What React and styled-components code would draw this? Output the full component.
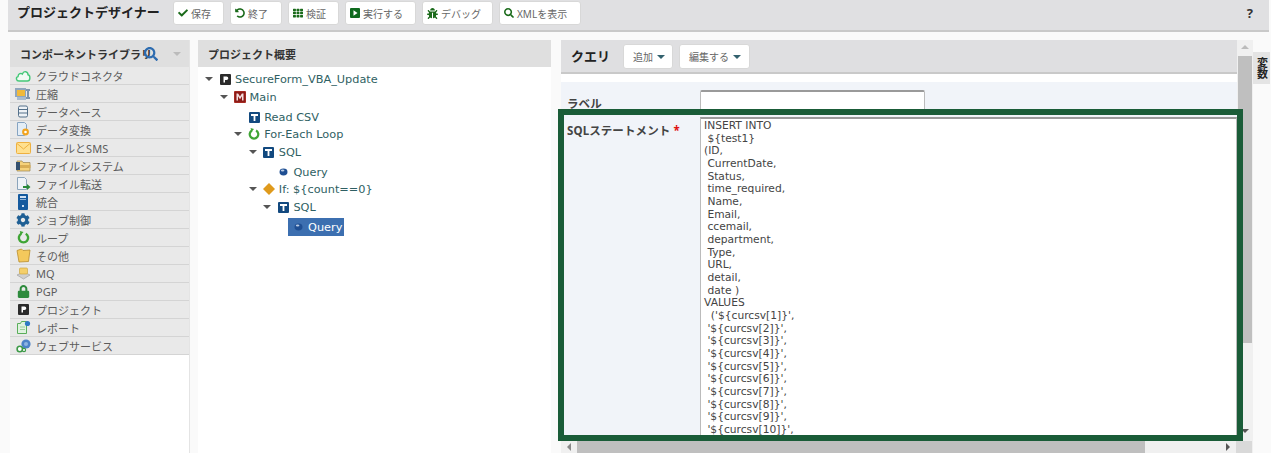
import styled, { createGlobalStyle } from "styled-components";
import { FaCheck, FaUndoAlt, FaTh, FaBug, FaSearch, FaCog, FaLock } from "react-icons/fa";

const GlobalStyle = createGlobalStyle`
  html, body {
    margin: 0;
    padding: 0;
    background: #fff;
  }
  body {
    font-family: "Noto Sans", "Noto Sans CJK JP", sans-serif;
    font-size: 12px;
    color: #555;
  }
`;

const Page = styled.div`
  position: relative;
  width: 1271px;
  height: 453px;
  overflow: hidden;
  background: #fafafa;
  box-sizing: border-box;
  padding-left: 8px;
`;

const TopBar = styled.div`
  display: flex;
  align-items: flex-start;
  width: 1261px;
  height: 32px;
  box-sizing: border-box;
  background: #e0e0e2;
  border-bottom: 2px solid #c9c9c9;
  padding: 1px 16px 0 9px;
`;

const AppTitle = styled.div`
  width: 156px;
  font-size: 13px;
  font-weight: 700;
  line-height: 22px;
  color: #222;
`;

const ToolGroup = styled.div`
  display: flex;
  gap: 6px;
`;

const ToolButton = styled.div`
  display: flex;
  align-items: center;
  gap: 3px;
  width: ${(p) => p.$w}px;
  height: 24px;
  box-sizing: border-box;
  padding-left: 4px;
  background: #fff;
  border: 1px solid #d8d8d8;
  border-radius: 3px;
  font-size: 10px;
  color: #666;
  white-space: nowrap;
  svg {
    flex: none;
    color: #1a6a1a;
  }
`;

const Help = styled.div`
  margin-left: auto;
  font-size: 13px;
  font-weight: 700;
  line-height: 24px;
  color: #333;
`;

const Columns = styled.div`
  display: flex;
  margin-top: 8px;
  height: 413px;
`;

const LibraryPanel = styled.div`
  width: 179px;
  margin-left: 2px;
  margin-right: 8px;
  background: #fff;
  border-right: 1px solid #e4e4e4;
`;

const PanelHeader = styled.div`
  display: flex;
  align-items: center;
  height: 27px;
  box-sizing: border-box;
  padding-left: 10px;
  background: #dfdfdf;
  font-size: 11px;
  font-weight: 700;
  color: #333;
`;

const HeaderCaret = styled.span`
  margin-left: 15px;
  width: 0;
  height: 0;
  border-left: 4px solid transparent;
  border-right: 4px solid transparent;
  border-top: 4px solid #bbb;
`;

const LibRow = styled.div`
  display: flex;
  align-items: center;
  height: 18px;
  box-sizing: border-box;
  padding-left: 5px;
  gap: 5px;
  background: #e9e9e9;
  border-bottom: 1px solid #d4d4d4;
  font-size: 11px;
  color: #5c5c5c;
  white-space: nowrap;
`;

const IconSlot = styled.span`
  display: flex;
  align-items: center;
  justify-content: center;
  flex: none;
  width: 16px;
  height: 16px;
`;

const OverviewPanel = styled.div`
  width: 353px;
  margin-right: 10px;
  background: #fff;
`;

const Tree = styled.div`
  padding-top: 3px;
`;

const TreeRow = styled.div`
  display: flex;
  align-items: center;
  height: 18px;
  margin-top: ${(p) => p.$gap || 0}px;
  padding-left: ${(p) => 7 + p.$level * 14.6}px;
  font-family: "DejaVu Sans", sans-serif;
  font-size: 11.3px;
  color: #2f5f63;
  white-space: nowrap;
`;

const Twist = styled.span`
  flex: none;
  width: 14px;
  display: flex;
  justify-content: flex-start;
  &::before {
    content: "";
    display: ${(p) => (p.$open ? "block" : "none")};
    border-left: 4px solid transparent;
    border-right: 4px solid transparent;
    border-top: 4px solid #555;
  }
`;

const NodeBody = styled.div`
  display: flex;
  align-items: center;
  height: 18px;
  ${(p) =>
    p.$selected &&
    `
    background: #3c6fb0;
    color: #fff;
    margin-left: -4px;
    padding: 0 2px 0 4px;
  `}
`;

const NodeIcon = styled.span`
  flex: none;
  display: flex;
  align-items: center;
  justify-content: center;
  width: 12px;
  height: 16px;
  margin-right: 4px;
`;

const QueryPanel = styled.div`
  width: 676px;
  display: flex;
  flex-direction: column;
  background: #fff;
`;

const QueryHeader = styled.div`
  display: flex;
  align-items: flex-start;
  gap: 6px;
  height: 34px;
  flex: none;
  box-sizing: border-box;
  padding: 4px 0 0 10px;
  background: #dfdfe1;
  border-bottom: 2px solid #c9c9c9;
`;

const QueryTitle = styled.div`
  width: 46px;
  font-size: 13px;
  font-weight: 700;
  line-height: 24px;
  color: #222;
`;

const MenuButton = styled.div`
  display: flex;
  align-items: center;
  gap: 4px;
  width: ${(p) => p.$w}px;
  height: 25px;
  box-sizing: border-box;
  padding-left: 9px;
  background: #fff;
  border: 1px solid #d8d8d8;
  border-radius: 3px;
  font-size: 10px;
  color: #666;
  &::after {
    content: "";
    border-left: 4px solid transparent;
    border-right: 4px solid transparent;
    border-top: 4px solid #33616e;
  }
`;

const FormArea = styled.div`
  flex: 1;
  margin-top: 8px;
  background: #f1f4f9;
  overflow: hidden;
  padding: 8px 0 0 6px;
`;

const FieldRow = styled.div`
  display: flex;
  margin-top: ${(p) => p.$top || 0}px;
`;

const FieldLabel = styled.div`
  width: 133px;
  flex: none;
  padding-top: 5px;
  font-size: 11.5px;
  font-weight: 700;
  letter-spacing: 0.1px;
  color: #444;
  span {
    color: #e01010;
  }
`;

const TextInput = styled.div`
  width: 225px;
  height: 25px;
  box-sizing: border-box;
  background: #fff;
  border: 1px solid #bbb;
  border-top: 2px solid #9a9a9a;
  border-radius: 2px;
`;

const SqlBox = styled.pre`
  flex: 1;
  height: 340px;
  margin: 0;
  box-sizing: border-box;
  padding: 1px 0 0 3px;
  background: #fff;
  border: 1px solid #bbb;
  border-top: 2px solid #9a9a9a;
  font-family: "DejaVu Sans", sans-serif;
  font-size: 10.7px;
  line-height: 12.67px;
  color: #444;
`;

const ScrollV = styled.div`
  width: 16px;
  display: flex;
  flex-direction: column;
  align-items: center;
  background: #f0f0f0;
`;

const ThumbV = styled.div`
  flex: none;
  height: 287px;
  width: 14px;
  margin-top: 7px;
  background: #bfbfbf;
`;

const Arrow = styled.span`
  flex: none;
  width: 0;
  height: 0;
  margin: ${(p) => p.$m};
  border: 4px solid transparent;
  ${(p) => p.$side}: 4px solid ${(p) => p.$color};
  ${(p) => (p.$side === "border-bottom" ? "border-top-width: 0;" : "")}
  ${(p) => (p.$side === "border-top" ? "border-bottom-width: 0;" : "")}
`;

const ScrollH = styled.div`
  position: absolute;
  left: 561px;
  top: 441px;
  width: 691px;
  height: 12px;
  display: flex;
  align-items: center;
  background: #f0f0f0;
`;

const ThumbH = styled.div`
  width: 568px;
  height: 12px;
  margin-left: 6px;
  background: #bfbfbf;
`;

const ScrollCorner = styled.div`
  width: 16px;
  height: 12px;
  background: #d9d9d9;
`;

const SideTabs = styled.div`
  width: 18px;
  padding-top: 12px;
`;

const SideTab = styled.div`
  width: 17px;
  height: 32px;
  display: flex;
  align-items: center;
  justify-content: center;
  background: #e4e4e4;
  writing-mode: vertical-rl;
  font-size: 11px;
  font-weight: 700;
  color: #222;
`;

const Highlight = styled.div`
  position: absolute;
  left: 558px;
  top: 109px;
  width: 685px;
  height: 332px;
  box-sizing: border-box;
  border: 6px solid #1a5c38;
  pointer-events: none;
`;

const CloudIcon = () => (
  <svg width="16" height="12" viewBox="0 0 16 12">
    <path d="M4 11 C1 11 .6 7.2 3 6.6 C3.2 3.6 6 2.8 7.4 4 C8.6 .4 13 1.2 13 4.8 C15.6 5.4 15.6 11 12.4 11 Z" fill="#f2faf4" stroke="#45c878" strokeWidth="1.4" />
  </svg>
);

const ZipIcon = () => (
  <svg width="16" height="14" viewBox="0 0 16 14">
    <rect x="0" y="1" width="11" height="9" fill="#8fa6bd" />
    <rect x="2" y="3" width="8" height="6" fill="#f0b93a" />
    <path d="M11 2h4v2h-1v6h1v2h-4v-2h1V4h-1z" fill="#7d94ac" />
    <rect x="2" y="10" width="9" height="3" fill="#a8bbcd" />
  </svg>
);

const DbIcon = () => (
  <svg width="12" height="13" viewBox="0 0 12 13">
    <rect x="1.5" y="1" width="9" height="11" rx="1.5" fill="#eef2f6" stroke="#54708a" />
    <path d="M2 4.5h8M2 8h8" stroke="#54708a" />
  </svg>
);

const TransformIcon = () => (
  <svg width="15" height="15" viewBox="0 0 15 15">
    <path d="M1.5 .5h7l2 2v6h-2v5h-7z" fill="#e3edf6" stroke="#86a4c2" />
    <circle cx="9.5" cy="10" r="3.4" fill="#f2a31c" />
    <circle cx="9.5" cy="10" r="1.3" fill="#fff" />
  </svg>
);

const MailIcon = () => (
  <svg width="15" height="12" viewBox="0 0 15 12">
    <rect x=".5" y=".5" width="14" height="11" rx="1" fill="#ffe08f" stroke="#eeb040" />
    <path d="M1 1.5 L7.5 7 L14 1.5" fill="none" stroke="#eeb040" />
  </svg>
);

const DriveIcon = () => (
  <svg width="15" height="13" viewBox="0 0 15 13">
    <path d="M1 2h5l1 1.5h7V12H1z" fill="#f6d27a" stroke="#9a8450" strokeWidth=".7" />
    <rect x="1" y="6" width="13.5" height="3" fill="#d9ae55" />
    <rect x="0" y="3" width="4" height="8" fill="#34506e" />
  </svg>
);

const TransferIcon = () => (
  <svg width="15" height="14" viewBox="0 0 15 14">
    <path d="M1.5 .5h7l2 2v10h-9z" fill="#eef3f8" stroke="#8ba4bb" />
    <path d="M7 9h4V7l3.5 3-3.5 3v-2H7z" fill="#27893a" />
  </svg>
);

const ServerIcon = () => (
  <svg width="10" height="16" viewBox="0 0 10 16">
    <rect width="10" height="16" rx="1" fill="#155a9e" />
    <rect x="2" y="2" width="6" height="2" fill="#cfe0f2" />
    <rect x="2" y="5" width="6" height="1" fill="#8fb3d8" />
    <rect x="4" y="11" width="2" height="2" fill="#cfe0f2" />
  </svg>
);

const LoopIcon = ({ size = 13 }) => (
  <svg width={size} height={size} viewBox="0 0 14 14">
    <path d="M4.6 2.9 A5 5 0 1 0 9.4 2.9" fill="none" stroke="#3fa535" strokeWidth="2.6" />
    <path d="M3 0 L7 1.2 L4 4.6 Z" fill="#3fa535" />
  </svg>
);

const OtherIcon = () => (
  <svg width="15" height="15" viewBox="0 0 15 15">
    <path d="M1 2.5 L5.5 1 L7 2.5 L14 2 L12.5 13.5 L3 14 Z" fill="#f4c95c" stroke="#b98d2c" strokeWidth=".8" />
  </svg>
);

const MqIcon = () => (
  <svg width="15" height="13" viewBox="0 0 15 13">
    <path d="M1 8 L7.5 5 L14 8 L7.5 12 Z" fill="#cfcfcf" stroke="#999" strokeWidth=".6" />
    <rect x="3.5" y="1" width="8" height="6" rx="1" fill="#f4cf6a" stroke="#c9a030" strokeWidth=".6" />
  </svg>
);

const ProjectIcon = () => (
  <svg width="11" height="11" viewBox="0 0 11 11">
    <rect width="11" height="11" rx="1" fill="#2b2b2b" />
    <path d="M3.5 2.5h3a1.8 1.8 0 0 1 0 3.6H5v2.4H3.5z" fill="#fff" />
  </svg>
);

const ReportIcon = () => (
  <svg width="15" height="15" viewBox="0 0 15 15">
    <path d="M1.5 3.5h3l1-2h5v12h-9z" fill="#dff2df" stroke="#5aae5a" />
    <path d="M4 7h5M4 9.5h5" stroke="#9ccc9c" />
    <circle cx="11.5" cy="3.5" r="2.6" fill="#2f78c4" />
  </svg>
);

const WebIcon = () => (
  <svg width="15" height="14" viewBox="0 0 15 14">
    <circle cx="10" cy="5" r="4.6" fill="#4c82c8" />
    <circle cx="10" cy="5" r="2" fill="#8db4e2" />
    <circle cx="3.8" cy="10" r="2.7" fill="#fff" stroke="#3d9a48" strokeWidth="1.6" />
    <circle cx="8" cy="11" r="1.6" fill="#fff" stroke="#3d9a48" strokeWidth="1.2" />
  </svg>
);

const MainIcon = () => (
  <svg width="12" height="12" viewBox="0 0 12 12">
    <rect width="12" height="12" rx="1" fill="#a52a22" />
    <rect x="1" y="1" width="10" height="10" fill="#8c1c18" />
    <path d="M2.5 9.5V2.5h1.6L6 5.6l1.9-3.1h1.6v7H8V5.2L6 8.2 4 5.2v4.3z" fill="#f3dede" />
  </svg>
);

const TaskIcon = () => (
  <svg width="11" height="11" viewBox="0 0 11 11">
    <rect width="11" height="11" rx="1" fill="#12497f" />
    <path d="M2 2h7v2H6.4v5H4.6V4H2z" fill="#fff" />
  </svg>
);

const QueryIcon = () => (
  <svg width="9" height="8" viewBox="0 0 9 8">
    <ellipse cx="4.5" cy="4" rx="4" ry="3.4" fill="#1f4f93" />
    <ellipse cx="3.6" cy="2.6" rx="1.8" ry="1" fill="#b9cbe4" />
  </svg>
);

const DiamondIcon = () => (
  <svg width="12" height="12" viewBox="0 0 12 12">
    <path d="M6 0 L12 6 L6 12 L0 6 Z" fill="#df9a1c" />
  </svg>
);

const RunIcon = () => (
  <svg width="10" height="10" viewBox="0 0 10 10">
    <rect width="10" height="10" rx="1" fill="#0f6a1e" />
    <path d="M3.5 2.2 L7.5 5 L3.5 7.8 Z" fill="#fff" />
  </svg>
);

const LibSearch = styled(FaSearch)`
  flex: none;
  margin-left: -8px;
  color: #2d6cb0;
`;

const libraryItems = [
  ["クラウドコネクタ", <CloudIcon />],
  ["圧縮", <ZipIcon />],
  ["データベース", <DbIcon />],
  ["データ変換", <TransformIcon />],
  ["EメールとSMS", <MailIcon />],
  ["ファイルシステム", <DriveIcon />],
  ["ファイル転送", <TransferIcon />],
  ["統合", <ServerIcon />],
  ["ジョブ制御", <FaCog size={14} color="#1f5f94" />],
  ["ループ", <LoopIcon />],
  ["その他", <OtherIcon />],
  ["MQ", <MqIcon />],
  ["PGP", <FaLock size={13} color="#2d8a3c" />],
  ["プロジェクト", <ProjectIcon />],
  ["レポート", <ReportIcon />],
  ["ウェブサービス", <WebIcon />],
];

const treeNodes = [
  { label: "SecureForm_VBA_Update", level: 0, open: true, icon: <ProjectIcon /> },
  { label: "Main", level: 1, open: true, icon: <MainIcon /> },
  { label: "Read CSV", level: 2, icon: <TaskIcon />, gap: 2 },
  { label: "For-Each Loop", level: 2, open: true, icon: <LoopIcon size={12} />, gap: -1 },
  { label: "SQL", level: 3, open: true, icon: <TaskIcon /> },
  { label: "Query", level: 4, icon: <QueryIcon />, gap: 2 },
  { label: "If: ${count==0}", level: 3, open: true, icon: <DiamondIcon />, gap: -1 },
  { label: "SQL", level: 4, open: true, icon: <TaskIcon /> },
  { label: "Query", level: 5, icon: <QueryIcon />, selected: true, gap: 2 },
];

const sql = `INSERT INTO
 \${test1}
(ID,
 CurrentDate,
 Status,
 time_required,
 Name,
 Email,
 ccemail,
 department,
 Type,
 URL,
 detail,
 date )
VALUES
  ('\${curcsv[1]}',
 '\${curcsv[2]}',
 '\${curcsv[3]}',
 '\${curcsv[4]}',
 '\${curcsv[5]}',
 '\${curcsv[6]}',
 '\${curcsv[7]}',
 '\${curcsv[8]}',
 '\${curcsv[9]}',
 '\${curcsv[10]}',`;

export default function App() {
  return (
    <Page>
      <GlobalStyle />
      <TopBar>
        <AppTitle>プロジェクトデザイナー</AppTitle>
        <ToolGroup>
          <ToolButton $w={51}><FaCheck size={10} />保存</ToolButton>
          <ToolButton $w={52}><FaUndoAlt size={10} />終了</ToolButton>
          <ToolButton $w={51}><FaTh size={10} />検証</ToolButton>
          <ToolButton $w={71}><RunIcon />実行する</ToolButton>
          <ToolButton $w={71}><FaBug size={11} />デバッグ</ToolButton>
          <ToolButton $w={82}><FaSearch size={10} />XMLを表示</ToolButton>
        </ToolGroup>
        <Help>?</Help>
      </TopBar>
      <Columns>
        <LibraryPanel>
          <PanelHeader>
            コンポーネントライブラリ
            <LibSearch size={14} />
            <HeaderCaret />
          </PanelHeader>
          {libraryItems.map(([label, icon]) => (
            <LibRow key={label}>
              <IconSlot>{icon}</IconSlot>
              {label}
            </LibRow>
          ))}
        </LibraryPanel>
        <OverviewPanel>
          <PanelHeader>プロジェクト概要</PanelHeader>
          <Tree>
            {treeNodes.map((n, i) => (
              <TreeRow key={i} $level={n.level} $gap={n.gap}>
                <Twist $open={n.open} />
                <NodeBody $selected={n.selected}>
                  <NodeIcon>{n.icon}</NodeIcon>
                  {n.label}
                </NodeBody>
              </TreeRow>
            ))}
          </Tree>
        </OverviewPanel>
        <QueryPanel>
          <QueryHeader>
            <QueryTitle>クエリ</QueryTitle>
            <MenuButton $w={50}>追加</MenuButton>
            <MenuButton $w={71}>編集する</MenuButton>
          </QueryHeader>
          <FormArea>
            <FieldRow>
              <FieldLabel>ラベル</FieldLabel>
              <TextInput />
            </FieldRow>
            <FieldRow $top={2}>
              <FieldLabel>SQLステートメント <span>*</span></FieldLabel>
              <SqlBox>{sql}</SqlBox>
            </FieldRow>
          </FormArea>
        </QueryPanel>
        <ScrollV>
          <Arrow $side="border-bottom" $color="#bbb" $m="5px 0 0" />
          <ThumbV />
          <Arrow $side="border-top" $color="#555" $m="auto 0 20px" />
        </ScrollV>
        <SideTabs>
          <SideTab>変数</SideTab>
        </SideTabs>
      </Columns>
      <ScrollH>
        <Arrow $side="border-right" $color="#888" $m="0 0 0 2px" />
        <ThumbH />
        <Arrow $side="border-left" $color="#555" $m="0 2px 0 auto" />
        <ScrollCorner />
      </ScrollH>
      <Highlight />
    </Page>
  );
}
